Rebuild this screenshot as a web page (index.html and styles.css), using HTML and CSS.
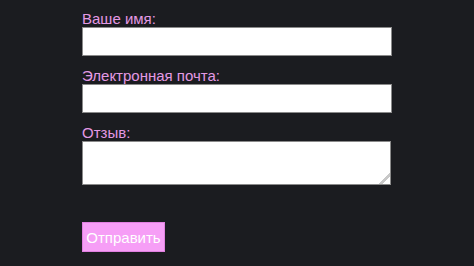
FILE: index.html
```html
<!DOCTYPE html>
<html lang="ru">
<head>
<meta charset="utf-8">
<link rel="stylesheet" href="styles.css">
</head>
<body>
<form class="feedback">
  <label class="field-label" for="name">Ваше имя:</label>
  <input class="field-input" id="name" type="text">
  <label class="field-label" for="email">Электронная почта:</label>
  <input class="field-input" id="email" type="email">
  <label class="field-label" for="review">Отзыв:</label>
  <textarea class="field-area" id="review"></textarea>
  <button class="submit" type="submit">Отправить</button>
</form>
</body>
</html>
```
FILE: styles.css
```css
html, body {
  margin: 0;
  padding: 0;
  background: #1b1c20;
}
body {
  font-family: "Liberation Sans", Arial, sans-serif;
  font-size: 15px;
}
.feedback {
  width: 310px;
  margin: 0 auto;
  padding-top: 10px;
  display: flex;
  flex-direction: column;
  align-items: flex-start;
}
.field-label {
  display: block;
  color: #e499e4;
  line-height: 17px;
  height: 17px;
}
.field-input {
  display: block;
  box-sizing: border-box;
  width: 310px;
  height: 29px;
  margin: 0 0 11px 0;
  border: 1px solid #8a8a8a;
  background: #ffffff;
  padding: 0 6px;
  font: inherit;
}
.field-area {
  display: block;
  box-sizing: border-box;
  width: 309px;
  height: 44px;
  margin: 0 0 37px 0;
  border: 1px solid #8a8a8a;
  background: #ffffff;
  padding: 4px 6px;
  font: inherit;
}
.field-area::-webkit-resizer {
  background: linear-gradient(135deg, transparent 60%, #c8c8c8 60%, #c8c8c8 75%, transparent 75%);
}
.submit {
  box-sizing: border-box;
  height: 30px;
  width: 83px;
  padding: 0;
  border: 1px solid #e080e0;
  background: #f69ef6;
  color: #ffffff;
  font-family: "Liberation Sans", Arial, sans-serif;
  font-size: 15px;
}
```
